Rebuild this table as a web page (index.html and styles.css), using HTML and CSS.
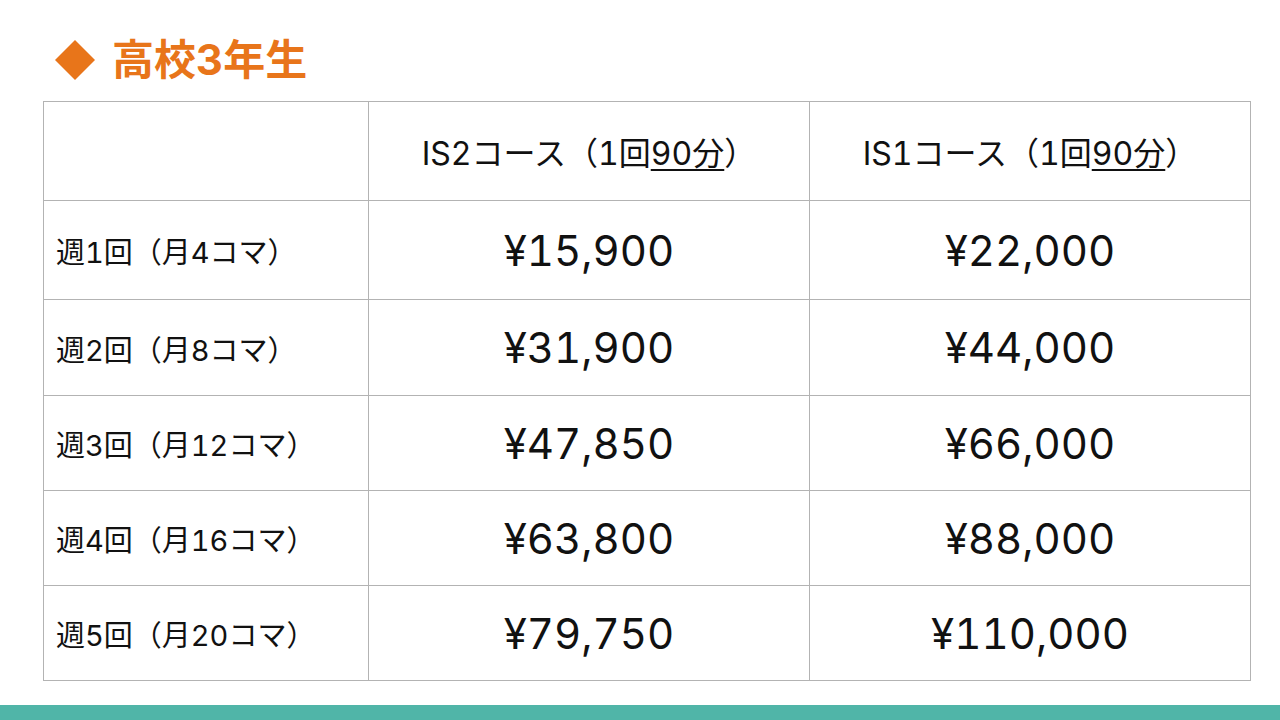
FILE: index.html
```html
<!DOCTYPE html>
<html lang="ja">
<head>
<meta charset="utf-8">
<link rel="stylesheet" href="styles.css">
</head>
<body>
<div class="page">
  <h1 class="title">
    <svg class="diamond" width="40" height="40" viewBox="0 0 40 40"><polygon points="20,0 40,20 20,40 0,20" fill="#e8751a"/></svg>
    <span>高校3年生</span>
  </h1>
  <table class="price">
    <colgroup><col class="c1"><col class="c2"><col class="c3"></colgroup>
    <tr class="head">
      <th></th>
      <th>IS2コース（1回<u>90分</u>）</th>
      <th>IS1コース（1回<u>90分</u>）</th>
    </tr>
    <tr class="r1"><td class="label">週1回（月4コマ）</td><td class="num">¥15,900</td><td class="num">¥22,000</td></tr>
    <tr class="r2"><td class="label">週2回（月8コマ）</td><td class="num">¥31,900</td><td class="num">¥44,000</td></tr>
    <tr class="r3"><td class="label">週3回（月12コマ）</td><td class="num">¥47,850</td><td class="num">¥66,000</td></tr>
    <tr class="r3"><td class="label">週4回（月16コマ）</td><td class="num">¥63,800</td><td class="num">¥88,000</td></tr>
    <tr class="r3"><td class="label">週5回（月20コマ）</td><td class="num">¥79,750</td><td class="num">¥110,000</td></tr>
  </table>
  <div class="bar"></div>
</div>
</body>
</html>
```
FILE: styles.css
```css
html, body {
  margin: 0;
  padding: 0;
  background: #fff;
}
.page {
  width: 1280px;
  height: 720px;
  display: flex;
  flex-direction: column;
  font-family: "Inter", "Noto Sans CJK JP", "Noto Sans", sans-serif;
  font-variant-numeric: tabular-nums;
  color: #111;
}
.title {
  margin: 40px 0 21px 55px;
  height: 40px;
  display: flex;
  align-items: center;
  gap: 17px;
  font-size: 42px;
  font-weight: 700;
  color: #e8751a;
  line-height: 40px;
}
.diamond { flex: none; }
.price {
  margin-left: 43px;
  width: 1207px;
  border-collapse: collapse;
  table-layout: fixed;
}
.c1 { width: 325px; }
.c2 { width: 441px; }
.c3 { width: 441px; }
.price th, .price td {
  border: 1.5px solid #b3b3b3;
  padding: 0;
}
.head th {
  height: 98px;
  font-weight: 400;
  font-size: 32px;
  text-align: center;
}
.head u { text-underline-offset: 4px; text-decoration-thickness: 2px; }
.r1 td { height: 98px; }
.r2 td { height: 95px; }
.r3 td { height: 94px; }
.label {
  font-size: 29px;
  padding-left: 12px !important;
}
.num {
  font-size: 42px;
  font-weight: 400;
  text-align: center;
}
.bar {
  margin-top: auto;
  height: 15px;
  background: #50b5a8;
}
```
